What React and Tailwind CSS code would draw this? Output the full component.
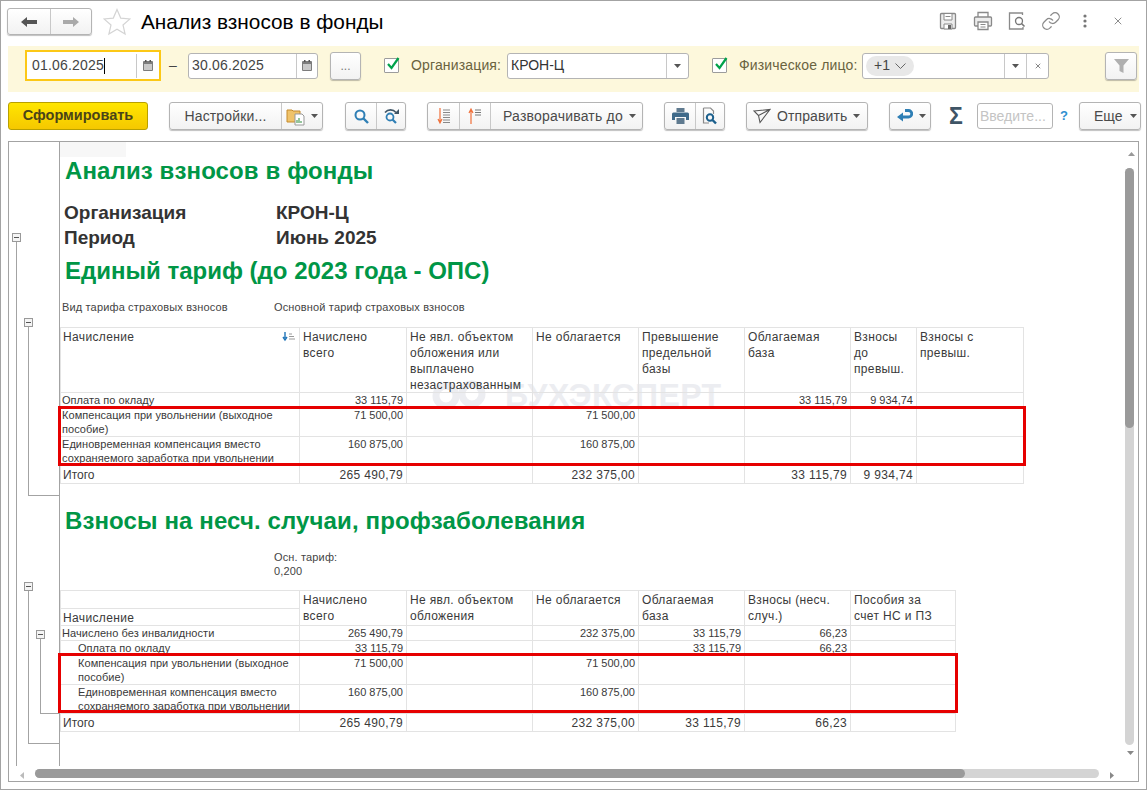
import { Link, X } from "lucide-react";

const BTN = "flex items-center h-[28px] bg-linear-to-b from-white to-[#f2f2f2] border border-[#b4b4b4] rounded-[3px] shadow-[0_1px_1px_rgba(0,0,0,0.25)] text-[14px] text-[#4a4a4a]";
const SEG = "flex items-center justify-center h-full border-r border-[#c8c8c8]";

const Caret = ({ className = "" }) => (
  <svg width="7" height="4" viewBox="0 0 7 4" className={className}><path d="M0 0h7L3.5 4z" fill="#555" /></svg>
);

const Calendar = () => (
  <svg width="10" height="11" viewBox="0 0 10 11">
    <rect x="0" y="1" width="10" height="10" rx="1" fill="#7c7c7c" />
    <rect x="1" y="4" width="8" height="6" fill="#c9c9c9" />
    <rect x="2" y="0" width="1.5" height="2" fill="#555" />
    <rect x="6.5" y="0" width="1.5" height="2" fill="#555" />
  </svg>
);

const Check = () => (
  <div className="relative w-[15px] h-[15px] border border-[#9c9c9c] bg-white rounded-[1px] shrink-0">
    <svg width="16" height="16" viewBox="0 0 16 16" className="absolute -top-[3px] left-0">
      <path d="M3 8l3.5 4L13.5 2" stroke="#00a24a" strokeWidth="2.2" fill="none" />
    </svg>
  </div>
);

const Sort = ({ up }) => (
  <svg width="14" height="18" viewBox="0 0 14 18">
    {up ? (
      <path d="M3 17V3M1 6l2-4 2 4" stroke="#f0703a" strokeWidth="1.2" fill="none" />
    ) : (
      <path d="M3 1v14M1 12l2 4 2-4" stroke="#f0703a" strokeWidth="1.2" fill="none" />
    )}
    {up ? (
      <path d="M7 3h6M7 5.5h6M7 8h6" stroke="#777" strokeWidth="1" />
    ) : (
      <path d="M6 3h7M6 5.5h7M6 8h7M6 10.5h7M6 13h7M6 15.5h7" stroke="#888" strokeWidth="1" />
    )}
  </svg>
);

const TreeBox = ({ className }) => (
  <div className={`absolute w-[9px] h-[9px] border border-[#999] bg-[#f4f4f4] flex items-center justify-center ${className}`}>
    <div className="w-[5px] h-px bg-[#555]" />
  </div>
);

const TH = ({ children, rowSpan, className = "" }) => (
  <th rowSpan={rowSpan} className={`border border-[#e3e3e3] align-top text-left font-normal text-[12px] leading-[16px] px-[3px] tracking-[0.35px] ${className}`}>
    <div className="relative top-px">{children}</div>
  </th>
);

const Cell = ({ children, left, indent }) => (
  <td className={`border border-[#e3e3e3] align-top text-[11px] leading-[14px] overflow-hidden ${left ? "text-left tracking-[0.05px]" : "text-right"} ${indent ? "pl-[17px] pr-[1px]" : left ? "pl-[1px] pr-[1px]" : "pr-[3px]"}`}>{children}</td>
);

const TotalRow = ({ values }) => (
  <tr className="h-[18px]">
    <td className="border border-[#e3e3e3] text-[12px] leading-[16px] pl-[2px]">Итого</td>
    {values.map((v, i) => (
      <td key={i} className="border border-[#e3e3e3] text-right text-[12px] leading-[16px] pr-[3px] tracking-[0.35px]">{v}</td>
    ))}
  </tr>
);

const RedBox = ({ className }) => (
  <div className={`absolute border-[3px] border-[#e60000] pointer-events-none ${className}`} />
);

const Watermark = () => (
  <div className="absolute left-[372px] top-[53px] flex items-center gap-[15px] text-[#ecedf1]">
    <svg width="58" height="30" viewBox="0 0 58 30">
      <circle cx="14" cy="16" r="10" fill="none" stroke="currentColor" strokeWidth="7" />
      <circle cx="40" cy="14" r="10" fill="none" stroke="currentColor" strokeWidth="7" />
    </svg>
    <span className="text-[32px] leading-[30px] font-bold tracking-[0.4px]">БУХЭКСПЕРТ</span>
  </div>
);

function TopTable() {
  return (
    <div className="relative mt-[13px] w-[963px]">
      <Watermark />
      <table className="relative table-fixed border-collapse w-[963px] text-[#3a3a3a]">
        <colgroup>
          <col className="w-[239px]" /><col className="w-[107px]" /><col className="w-[126px]" /><col className="w-[106px]" />
          <col className="w-[106px]" /><col className="w-[106px]" /><col className="w-[66px]" /><col className="w-[107px]" />
        </colgroup>
        <tbody>
          <tr className="h-[65px]">
            <TH className="pl-[2px]">
              <div className="flex justify-between">
                <span>Начисление</span>
                <svg width="14" height="10" viewBox="0 0 14 10" className="mt-[3px]">
                  <path d="M3 0v6M1 5l2 3 2-3" stroke="#1f74b8" strokeWidth="1.4" fill="none" />
                  <path d="M7 2h3M7 4.500h5M7 7h6" stroke="#999" strokeWidth="1" />
                </svg>
              </div>
            </TH>
            <TH>Начислено<br />всего</TH>
            <TH>Не явл. объектом обложения или выплачено незастрахованным</TH>
            <TH>Не облагается</TH>
            <TH>Превышение предельной базы</TH>
            <TH>Облагаемая база</TH>
            <TH>Взносы до превыш.</TH>
            <TH>Взносы с превыш.</TH>
          </tr>
          <tr className="h-[15px]">
            <Cell left>Оплата по окладу</Cell><Cell>33 115,79</Cell><Cell /><Cell /><Cell /><Cell>33 115,79</Cell><Cell>9 934,74</Cell><Cell />
          </tr>
          <tr className="h-[29px]">
            <Cell left>Компенсация при увольнении (выходное пособие)</Cell><Cell>71 500,00</Cell><Cell /><Cell>71 500,00</Cell><Cell /><Cell /><Cell /><Cell />
          </tr>
          <tr className="h-[29px]">
            <Cell left>Единовременная компенсация вместо сохраняемого заработка при увольнении</Cell><Cell>160 875,00</Cell><Cell /><Cell>160 875,00</Cell><Cell /><Cell /><Cell /><Cell />
          </tr>
          <TotalRow values={["265 490,79", "", "232 375,00", "", "33 115,79", "9 934,74", ""]} />
        </tbody>
      </table>
      <RedBox className="-left-[2px] top-[79px] w-[968px] h-[60px]" />
    </div>
  );
}

function BottomTable() {
  return (
    <div className="relative mt-[12px] w-[895px]">
      <table className="table-fixed border-collapse w-[895px] text-[#3a3a3a]">
        <colgroup>
          <col className="w-[239px]" /><col className="w-[107px]" /><col className="w-[126px]" /><col className="w-[106px]" />
          <col className="w-[106px]" /><col className="w-[106px]" /><col className="w-[105px]" />
        </colgroup>
        <tbody>
          <tr className="h-[18px]">
            <th className="border border-[#e3e3e3]" />
            <TH rowSpan={2}>Начислено<br />всего</TH>
            <TH rowSpan={2}>Не явл. объектом обложения</TH>
            <TH rowSpan={2}>Не облагается</TH>
            <TH rowSpan={2}>Облагаемая база</TH>
            <TH rowSpan={2}>Взносы (несч. случ.)</TH>
            <TH rowSpan={2}>Пособия за<br />счет НС и ПЗ</TH>
          </tr>
          <tr className="h-[17px]"><TH className="pl-[2px]">Начисление</TH></tr>
          <tr className="h-[14px]">
            <Cell left>Начислено без инвалидности</Cell><Cell>265 490,79</Cell><Cell /><Cell>232 375,00</Cell><Cell>33 115,79</Cell><Cell>66,23</Cell><Cell />
          </tr>
          <tr className="h-[15px]">
            <Cell left indent>Оплата по окладу</Cell><Cell>33 115,79</Cell><Cell /><Cell /><Cell>33 115,79</Cell><Cell>66,23</Cell><Cell />
          </tr>
          <tr className="h-[29px]">
            <Cell left indent>Компенсация при увольнении (выходное пособие)</Cell><Cell>71 500,00</Cell><Cell /><Cell>71 500,00</Cell><Cell /><Cell /><Cell />
          </tr>
          <tr className="h-[29px]">
            <Cell left indent>Единовременная компенсация вместо сохраняемого заработка при увольнении</Cell><Cell>160 875,00</Cell><Cell /><Cell>160 875,00</Cell><Cell /><Cell /><Cell />
          </tr>
          <TotalRow values={["265 490,79", "", "232 375,00", "33 115,79", "66,23", ""]} />
        </tbody>
      </table>
      <RedBox className="-left-[2px] top-[63px] w-[900px] h-[60px]" />
    </div>
  );
}

export default function App() {
  return (
    <div className="w-[1147px] h-[790px] bg-white border border-[#a3a3a3] font-['Liberation_Sans',Arial,sans-serif] overflow-hidden flex flex-col text-[#333]">
      {/* Title row */}
      <div className="flex items-start h-[45px] pl-[6px] pt-[7px] shrink-0">
        <div className="flex items-center w-[85px] h-[27px] bg-linear-to-b from-white to-[#f2f2f2] border border-[#b4b4b4] rounded-[3px] shadow-[0_1px_1px_rgba(0,0,0,0.25)]">
          <div className="flex items-center justify-center w-[43px] h-full border-r border-[#c8c8c8]">
            <svg width="16" height="10" viewBox="0 0 16 10"><path d="M0 5l6-5v3h10v4H6v3z" fill="#555" /></svg>
          </div>
          <div className="flex items-center justify-center flex-1 h-full">
            <svg width="16" height="10" viewBox="0 0 16 10"><path d="M16 5l-6-5v3H0v4h10v3z" fill="#aaa" /></svg>
          </div>
        </div>
        <svg width="28" height="28" viewBox="0 0 28 28" className="ml-[11px]">
          <path d="M14 1.500l3.700 8.600 9.300.8-7 6.100 2.100 9.100L14 21.300l-8.100 4.800L8 17 1 10.900l9.300-.8z" fill="none" stroke="#d4d4d4" strokeWidth="1.2" />
        </svg>
        <h1 className="ml-[10px] mt-[1px] text-[20.8px] leading-[26px] font-normal text-black">Анализ взносов в фонды</h1>
        <div className="ml-auto flex items-center h-[26px] pr-[22px] text-[#8a8a8a]">
          <svg width="18" height="18" viewBox="0 0 18 18">
            <path d="M1.500 2.500a1 1 0 011-1h13a1 1 0 011 1v13a1 1 0 01-1 1h-13a1 1 0 01-1-1z" fill="#ededed" stroke="#8a8a8a" strokeWidth="1.300" />
            <path d="M5 2v6h8V2" fill="#fff" stroke="#8a8a8a" />
            <path d="M6.500 4.500h5" stroke="#8a8a8a" />
            <path d="M5 12h8v5H5z" fill="#fff" stroke="#8a8a8a" />
            <path d="M9 13h3v4H9z" fill="#666" />
          </svg>
          <svg width="20" height="20" viewBox="0 0 20 20" className="ml-[16px]">
            <path d="M5 6V1.500h10V6" fill="#fff" stroke="#8a8a8a" strokeWidth="1.300" />
            <path d="M5 15H2.500a1 1 0 01-1-1V7a1 1 0 011-1h15a1 1 0 011 1v7a1 1 0 01-1 1H15" fill="#ededed" stroke="#8a8a8a" strokeWidth="1.300" />
            <path d="M5 11h10v7.500H5z" fill="#fff" stroke="#8a8a8a" strokeWidth="1.300" />
            <path d="M7.500 13.500h5M7.500 16h5" stroke="#8a8a8a" />
          </svg>
          <svg width="18" height="19" viewBox="0 0 18 19" className="ml-[15px]">
            <path d="M8 1H1.500v16H15v-2" fill="none" stroke="#8a8a8a" strokeWidth="1.300" />
            <path d="M8 1h6.500v2" fill="none" stroke="#8a8a8a" strokeWidth="1.300" />
            <circle cx="11" cy="9" r="3.500" fill="none" stroke="#777" strokeWidth="1.300" />
            <path d="M13.500 11.500l3 3" stroke="#777" strokeWidth="1.600" />
          </svg>
          <Link className="ml-[15px]" size={20} strokeWidth={1.5} />
          <svg width="4" height="14" viewBox="0 0 4 14" className="ml-[22px]">
            <circle cx="2" cy="2" r="1.600" fill="#777" /><circle cx="2" cy="7" r="1.600" fill="#777" /><circle cx="2" cy="12" r="1.600" fill="#777" />
          </svg>
          <X className="ml-[25px] text-[#666]" size={12} strokeWidth={1.5} />
        </div>
      </div>

      {/* Filter bar */}
      <div className="relative ml-[7px] w-[1131px] h-[46px] bg-[#fdf8dc] flex items-center pb-[7px] shrink-0 text-[14px]">
        <div className="ml-[17px] flex items-center w-[136px] h-[31px] bg-white border-2 border-[#fcc816]">
          <span className="ml-[5px] w-[104px] text-[#444] tracking-[0.2px]">01.06.2025<span className="inline-block w-px h-[16px] bg-black align-middle" /></span>
          <div className="flex items-center justify-center flex-1 h-[24px] border-l border-[#c8c8c8]"><Calendar /></div>
        </div>
        <div className="w-[24px] text-center text-[#444]">–</div>
        <div className="ml-[3px] flex items-center w-[130px] h-[26px] bg-white border border-[#b4b4b4] rounded-[3px]">
          <span className="ml-[3px] w-[104px] text-[#444] tracking-[0.2px]">30.06.2025</span>
          <div className="flex items-center justify-center flex-1 h-full border-l border-[#c8c8c8]"><Calendar /></div>
        </div>
        <div className="ml-[12px] flex items-center justify-center w-[31px] h-[28px] bg-linear-to-b from-white to-[#f2f2f2] border border-[#b4b4b4] rounded-[3px] shadow-[0_1px_1px_rgba(0,0,0,0.25)] text-[#777] text-[12px]">...</div>
        <div className="ml-[23px]"><Check /></div>
        <span className="ml-[12px] w-[96px] text-[#6a6340] tracking-[0.15px]">Организация:</span>
        <div className="flex items-center w-[182px] h-[26px] bg-white border border-[#b4b4b4] rounded-[3px]">
          <span className="ml-[3px] flex-1 text-[#333]">КРОН-Ц</span>
          <div className="flex items-center justify-center w-[22px] h-full border-l border-[#c8c8c8]"><Caret /></div>
        </div>
        <div className="ml-[23px]"><Check /></div>
        <span className="ml-[12px] w-[123px] text-[#6a6340] tracking-[0.15px]">Физическое лицо:</span>
        <div className="flex items-center w-[187px] h-[26px] bg-white border border-[#b4b4b4] rounded-[3px]">
          <div className="ml-[3px] flex items-center justify-center w-[48px] h-[20px] rounded-full bg-[#e8e8e8] text-[#444] gap-[5px]">
            +1
            <svg width="11" height="6" viewBox="0 0 11 6"><path d="M.5.500l5 5 5-5" fill="none" stroke="#666" /></svg>
          </div>
          <div className="ml-auto flex items-center justify-center w-[22px] h-full border-l border-[#c8c8c8]"><Caret /></div>
          <div className="flex items-center justify-center w-[22px] h-full border-l border-[#c8c8c8]"><X size={8} strokeWidth={3} className="text-[#888]" /></div>
        </div>
        <div className="ml-[56px] flex items-center justify-center w-[32px] h-[28px] bg-linear-to-b from-white to-[#f2f2f2] border border-[#b4b4b4] rounded-[3px] shadow-[0_1px_1px_rgba(0,0,0,0.25)]">
          <svg width="15" height="14" viewBox="0 0 15 14"><path d="M0 0h15L9.500 6.500V14l-4-2V6.500z" fill="#b0b0b0" /></svg>
        </div>
      </div>

      {/* Toolbar */}
      <div className="flex items-center h-[28px] mt-[10px] pl-[7px] shrink-0">
        <div className="flex items-center justify-center w-[140px] h-[28px] bg-linear-to-b from-[#ffe600] to-[#f5c800] border border-[#b8a000] rounded-[3px] text-[14.5px] font-bold text-[#4a4418]">Сформировать</div>
        <div className={`${BTN} ml-[21px] w-[154px]`}>
          <div className={`${SEG} w-[112px] tracking-[0.15px]`}>Настройки...</div>
          <div className="flex items-center justify-center flex-1 gap-[5px]">
            <svg width="20" height="20" viewBox="0 0 20 20">
              <path d="M1 4h5l1 1h7v11H1z" fill="#f0c36a" stroke="#c48a2c" />
              <path d="M9 8h7l2 2v9H9z" fill="#fff" stroke="#999" />
              <path d="M11 17v-3M13 17v-5M15 17v-2" stroke="#4f9e5a" strokeWidth="1.2" />
            </svg>
            <Caret />
          </div>
        </div>
        <div className={`${BTN} ml-[22px] w-[61px]`}>
          <div className={`${SEG} w-[31px]`}>
            <svg width="15" height="15" viewBox="0 0 15 15">
              <circle cx="6" cy="6" r="4.500" fill="none" stroke="#2f7fb5" strokeWidth="2" />
              <path d="M9.500 9.500l4.500 4.500" stroke="#2f7fb5" strokeWidth="2.400" />
            </svg>
          </div>
          <div className="flex items-center justify-center flex-1">
            <svg width="17" height="15" viewBox="0 0 17 15">
              <circle cx="7" cy="8" r="3.500" fill="none" stroke="#2f7fb5" strokeWidth="1.800" />
              <path d="M9.500 10.500l3.500 3.500" stroke="#2f7fb5" strokeWidth="2.200" />
              <path d="M2 3.500c3-3.500 8-3.500 11 0" fill="none" stroke="#3f5566" strokeWidth="1.600" />
              <path d="M11 5h5V0z" fill="#3f5566" />
            </svg>
          </div>
        </div>
        <div className={`${BTN} ml-[21px] w-[216px]`}>
          <div className={`${SEG} w-[32px]`}><Sort /></div>
          <div className={`${SEG} w-[31px]`}><Sort up /></div>
          <div className="flex items-center flex-1 pl-[12px] gap-[6px] tracking-[0.2px]">Разворачивать до <Caret /></div>
        </div>
        <div className={`${BTN} ml-[21px] w-[61px]`}>
          <div className={`${SEG} w-[31px]`}>
            <svg width="17" height="16" viewBox="0 0 17 16">
              <path d="M4.500 0h8v4h-8z" fill="#5f7a8f" />
              <path d="M1.500 4.500h14a1.500 1.500 0 011.500 1.500v6h-3V9H3v3H0V6a1.500 1.500 0 011.500-1.500z" fill="#3f6a8a" />
              <path d="M4.500 10h8v6h-8z" fill="#5f7a8f" />
            </svg>
          </div>
          <div className="flex items-center justify-center flex-1">
            <svg width="16" height="18" viewBox="0 0 16 18">
              <path d="M1.500 1h7l3 3v3M1.500 1v15H7" fill="none" stroke="#8a8a8a" strokeWidth="1.200" />
              <circle cx="8" cy="10.500" r="3.200" fill="none" stroke="#1b5f8c" strokeWidth="2" />
              <path d="M10.500 13l3.500 3.500" stroke="#1b5f8c" strokeWidth="2.400" />
            </svg>
          </div>
        </div>
        <div className={`${BTN} ml-[21px] w-[122px] pl-[6px] gap-[6px] tracking-[0.1px]`}>
          <svg width="18" height="16" viewBox="0 0 18 16"><path d="M1 3l16-1.500-10 13-1.500-7zM5.500 7.500L17 1.500" fill="none" stroke="#555" strokeWidth="1.100" /></svg>
          Отправить <Caret />
        </div>
        <div className={`${BTN} ml-[21px] w-[42px] pl-[7px] gap-[6px]`}>
          <svg width="16" height="14" viewBox="0 0 16 14"><path d="M8 1.500h3.500a3 3 0 010 6.500H4" fill="none" stroke="#2f7fb5" strokeWidth="2.800" /><path d="M0 8l6-4.500v9z" fill="#2f7fb5" /></svg>
          <Caret />
        </div>
        <span className="ml-[18px] w-[17px] text-[23px] leading-[28px] font-bold text-[#3f5566]">Σ</span>
        <div className="ml-[11px] flex items-center w-[76px] h-[26px] bg-white border border-[#b4b4b4] rounded-[3px] pl-[2px] text-[14px] text-[#c4c4c4] overflow-hidden whitespace-nowrap">Введите...</div>
        <span className="ml-[7px] w-[8px] text-[13px] font-bold text-[#2f8fd0]">?</span>
        <div className={`${BTN} ml-[11px] w-[62px] pl-[14px] gap-[7px]`}>Еще <Caret /></div>
      </div>

      {/* Report frame */}
      <div className="mt-[11px] ml-[7px] w-[1131px] h-[641px] border border-[#a3a3a3] flex flex-col shrink-0">
        <div className="flex h-[624px]">
          <div className="relative w-[51px] h-full border-r border-[#a3a3a3] shrink-0">
            <div className="absolute left-[7px] top-[100px] w-px h-[524px] bg-[#a3a3a3]" />
            <div className="absolute left-[19px] top-[185px] w-px h-[168px] bg-[#a3a3a3]" />
            <div className="absolute left-[19px] top-[353px] w-[31px] h-px bg-[#a3a3a3]" />
            <div className="absolute left-[19px] top-[449px] w-px h-[152px] bg-[#a3a3a3]" />
            <div className="absolute left-[19px] top-[601px] w-[31px] h-px bg-[#a3a3a3]" />
            <div className="absolute left-[31px] top-[497px] w-px h-[74px] bg-[#a3a3a3]" />
            <div className="absolute left-[31px] top-[571px] w-[19px] h-px bg-[#a3a3a3]" />
            <TreeBox className="left-[3px] top-[91px]" />
            <TreeBox className="left-[15px] top-[176px]" />
            <TreeBox className="left-[15px] top-[440px]" />
            <TreeBox className="left-[27px] top-[488px]" />
          </div>
          <div className="flex-1 min-w-0">
            <div className="h-[15px] w-[66px] bg-[#f7f7f7]" />
            <h2 className="ml-[5px] text-[24px] leading-[28px] font-bold text-[#009646] tracking-[0.12px]">Анализ взносов в фонды</h2>
            <div className="mt-[15px] ml-[4px] flex text-[19px] leading-[25px] font-bold text-[#333]"><span className="w-[212px]">Организация</span><span>КРОН-Ц</span></div>
            <div className="ml-[4px] flex text-[19px] leading-[25px] font-bold text-[#333]"><span className="w-[212px]">Период</span><span>Июнь 2025</span></div>
            <h2 className="mt-[7px] ml-[5px] text-[24px] leading-[28px] font-bold text-[#009646]">Единый тариф (до 2023 года - ОПС)</h2>
            <div className="mt-[15px] ml-[2px] flex text-[11px] leading-[14px] text-[#444] tracking-[0.15px]"><span className="w-[212px]">Вид тарифа страховых взносов</span><span>Основной тариф страховых взносов</span></div>
            <TopTable />
            <h2 className="mt-[23px] ml-[5px] text-[24px] leading-[28px] font-bold text-[#009646] tracking-[0.12px]">Взносы на несч. случаи, профзаболевания</h2>
            <div className="mt-[15px] ml-[214px] text-[11px] leading-[14px] text-[#444] tracking-[0.15px]">Осн. тариф:<br />0,200</div>
            <BottomTable />
          </div>
          <div className="relative w-[13px] h-full shrink-0">
            <svg width="7" height="4" viewBox="0 0 7 4" className="absolute left-[3px] top-[10px]"><path d="M0 4h7L3.500 0z" fill="#999" /></svg>
            <div className="absolute left-0 top-[26px] w-[9px] h-[577px] rounded-full bg-[#d4d4d4]" />
            <div className="absolute left-0 top-[26px] w-[9px] h-[260px] rounded-full bg-[#9a9a9a]" />
            <svg width="7" height="4" viewBox="0 0 7 4" className="absolute left-[2px] top-[609px]"><path d="M0 0h7L3.500 4z" fill="#888" /></svg>
          </div>
        </div>
        <div className="relative flex-1">
          <svg width="4" height="7" viewBox="0 0 4 7" className="absolute left-[11px] top-[6px]"><path d="M4 0v7L0 3.500z" fill="#bbb" /></svg>
          <div className="absolute left-[26px] top-[3px] w-[1064px] h-[9px] rounded-full bg-[#d4d4d4]" />
          <div className="absolute left-[26px] top-[3px] w-[930px] h-[9px] rounded-full bg-[#9a9a9a]" />
          <svg width="4" height="7" viewBox="0 0 4 7" className="absolute left-[1101px] top-[6px]"><path d="M0 0v7l4-3.500z" fill="#888" /></svg>
        </div>
      </div>
    </div>
  );
}
